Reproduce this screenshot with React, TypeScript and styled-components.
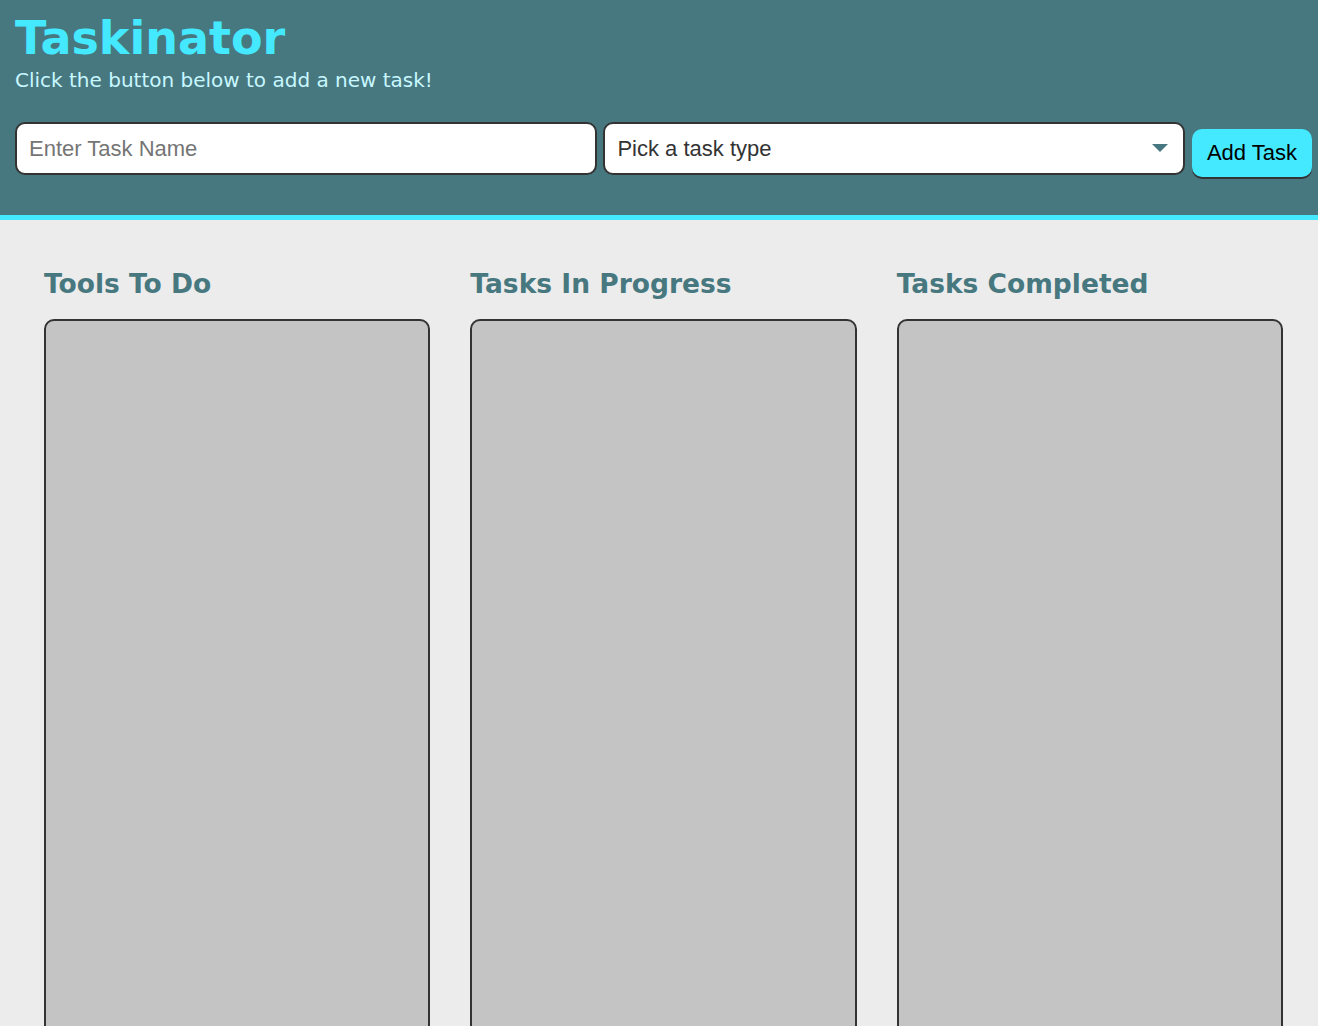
import React from "react";
import styled, { createGlobalStyle } from "styled-components";

const GlobalStyle = createGlobalStyle`
  html, body { margin: 0; padding: 0; background: #ececec; }
  body { font-family: "DejaVu Sans", Verdana, sans-serif; }
  * { box-sizing: border-box; }
`;

const Header = styled.header`
  background: #477880;
  border-bottom: 5px solid #45e9ff;
  padding: 10px 6px 38px 15px;
`;

const Title = styled.h1`
  margin: 0;
  font-family: "DejaVu Sans", Verdana, sans-serif;
  font-weight: bold;
  font-size: 46px;
  line-height: 56px;
  color: #45e9ff;
`;

const Subtitle = styled.p`
  margin: 0 0 28px;
  font-size: 20px;
  line-height: 28px;
  color: #c7f7ff;
`;

const Form = styled.form`
  display: grid;
  grid-template-columns: 1fr 1fr auto;
  column-gap: 6.5px;
  align-items: start;
`;

const Field = styled.input`
  width: 100%;
  min-width: 0;
  height: 53px;
  border: 2px solid #333;
  border-radius: 10px;
  padding: 0 12px;
  font-family: "Liberation Sans", Arial, sans-serif;
  font-size: 22px;
  color: #333;
  background: #fff;
  outline: none;
  &::placeholder { color: #757575; }
`;

const SelectWrap = styled.div`
  min-width: 0;
  position: relative;
  height: 53px;
`;

const Select = styled.select`
  width: 100%;
  height: 100%;
  appearance: none;
  border: 2px solid #333;
  border-radius: 10px;
  padding: 0 12px;
  font-family: "Liberation Sans", Arial, sans-serif;
  font-size: 22px;
  color: #333;
  background: #fff;
  outline: none;
`;

const Caret = styled.span`
  position: absolute;
  right: 17px;
  top: 22px;
  width: 0;
  height: 0;
  border-left: 8px solid transparent;
  border-right: 8px solid transparent;
  border-top: 8px solid #477880;
  pointer-events: none;
`;

const Button = styled.button`
  margin-top: 7px;
  height: 48px;
  padding: 0 15px;
  border: none;
  border-radius: 10px;
  background: #45e9ff;
  box-shadow: 0 2px 0 #333;
  font-family: "Liberation Sans", Arial, sans-serif;
  font-size: 22px;
  color: #000;
  cursor: pointer;
`;

const Board = styled.main`
  display: grid;
  grid-template-columns: repeat(3, 1fr);
  gap: 40px;
  padding: 48px 35px 0 44px;
`;

const Column = styled.section`
  display: flex;
  flex-direction: column;
`;

const ColumnTitle = styled.h2`
  margin: 0 0 19px;
  font-size: 26.5px;
  line-height: 32px;
  font-weight: bold;
  color: #477880;
`;

const TaskList = styled.ul`
  margin: 0;
  padding: 0;
  list-style: none;
  height: 800px;
  background: #c4c4c4;
  border: 2px solid #333;
  border-radius: 10px;
`;

export default function App() {
  const columns = ["Tools To Do", "Tasks In Progress", "Tasks Completed"];
  return (
    <>
      <GlobalStyle />
      <Header>
        <Title>Taskinator</Title>
        <Subtitle>Click the button below to add a new task!</Subtitle>
        <Form onSubmit={(e) => e.preventDefault()}>
          <Field type="text" placeholder="Enter Task Name" />
          <SelectWrap>
            <Select defaultValue="">
              <option value="" disabled>Pick a task type</option>
              <option value="print">Print</option>
              <option value="web">Web</option>
              <option value="mobile">Mobile</option>
            </Select>
            <Caret />
          </SelectWrap>
          <Button type="submit">Add Task</Button>
        </Form>
      </Header>
      <Board>
        {columns.map((c) => (
          <Column key={c}>
            <ColumnTitle>{c}</ColumnTitle>
            <TaskList />
          </Column>
        ))}
      </Board>
    </>
  );
}
